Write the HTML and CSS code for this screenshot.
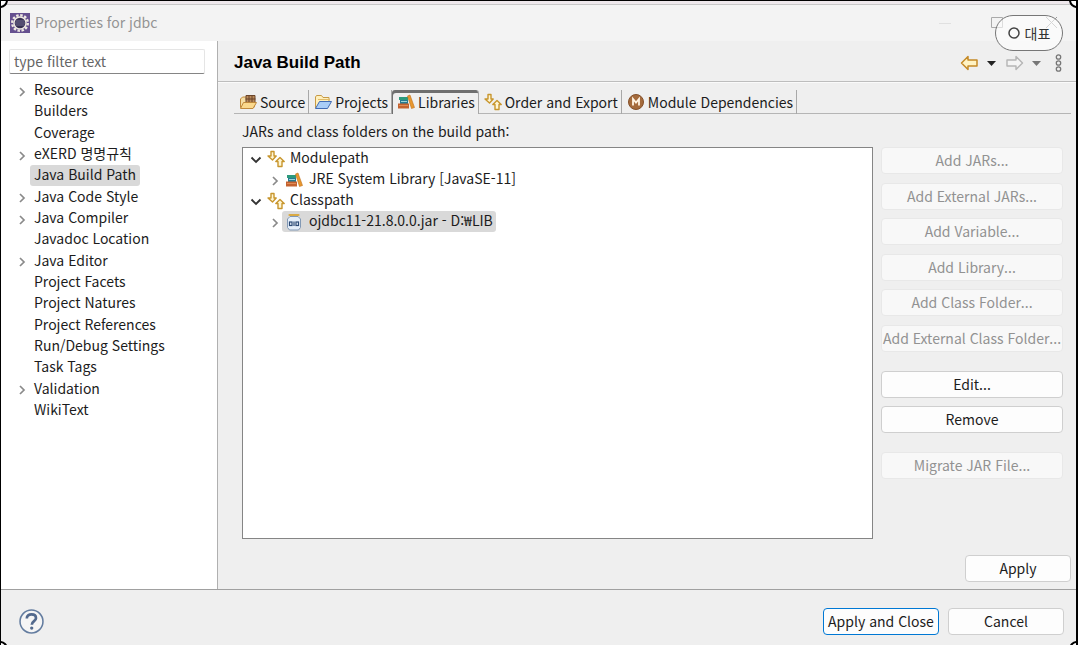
FILE: index.html
```html
<!DOCTYPE html>

<html lang="ko">

	<head>
		<meta charset="utf-8">
		<title>Properties for jdbc</title>
		<link rel="stylesheet" href="styles.css">
	</head>

	<body>

		<!-- shapes used more than once -->
		<svg class="symbols">
			<symbol id="closed" viewBox="0 0 8 10"><path d="M2 1l4 4-4 4" fill="none" stroke="#8a8a8a" stroke-width="1.7"/></symbol>
			<symbol id="opened" viewBox="0 0 12 8"><path d="M1.5 1.5L6 6l4.500-4.500" fill="none" stroke="#333" stroke-width="1.900"/></symbol>
			<symbol id="order" viewBox="0 0 18 18">
				<g fill="#fff6d5" stroke="#c8962e" stroke-width="1.400" stroke-linejoin="round">
					<path d="M4 1.500h3v4.500h2.200L5.500 10 1 6h3z"/>
					<path d="M13 7.500l4.200 4h-2.200v5h-4v-5H8.800z"/>
				</g>
			</symbol>
			<symbol id="books" viewBox="0 0 18 16">
				<path d="M2 3h9v3H2z" fill="#2c9a7c"/>
				<path d="M3 6h8v4H3z" fill="#267a93"/>
				<path d="M4 7h6v1H4z" fill="#9bd4d6"/>
				<path d="M1 9.500h11v5H1z" fill="#c4622f"/>
				<path d="M2 11h9v1H2z" fill="#e08b56"/>
				<path d="M10.500 2l2.500-1 4.500 12.500-3 1z" fill="#e9982e" stroke="#bd6e1b" stroke-width=".6"/>
			</symbol>
		</svg>

		<div class="window">

			<header class="title-bar">
				<svg class="app-icon" viewBox="0 0 20 20">
					<rect width="20" height="20" fill="#65508f"/>
					<circle cx="10" cy="10" r="7.800" fill="none" stroke="#eee9e2" stroke-width="2.400" stroke-dasharray="2.500 1.580"/>
					<circle cx="10" cy="10" r="6.800" fill="#eee9e2"/>
					<circle cx="10" cy="10" r="5.300" fill="#363052"/>
					<path d="M5.500 8h9M5 10h10M5.500 12h9" stroke="#736d91"/>
				</svg>
				<h1>Properties for jdbc</h1>
				<svg class="window-controls" viewBox="0 0 122 16">
					<path d="M0 8.500h12" stroke="#e0e0e0"/>
					<path d="M52.500 2.500h11v10h-11z" fill="none" stroke="#aaa"/>
					<path d="M107 2l11 11M118 2l-11 11" stroke="#999"/>
				</svg>
				<div class="badge"><svg viewBox="0 0 12 12"><circle cx="6" cy="6" r="5" fill="none" stroke="#444" stroke-width="1.500"/></svg>대표</div>
			</header>

			<div class="content">

				<nav class="sidebar">
					<input class="filter" type="text" placeholder="type filter text" aria-label="Filter">
					<ul class="pages">
						<li><svg class="arrow"><use href="#closed"/></svg><span>Resource</span></li>
						<li><span>Builders</span></li>
						<li><span>Coverage</span></li>
						<li><svg class="arrow"><use href="#closed"/></svg><span>eXERD 명명규칙</span></li>
						<li><span class="selected">Java Build Path</span></li>
						<li><svg class="arrow"><use href="#closed"/></svg><span>Java Code Style</span></li>
						<li><svg class="arrow"><use href="#closed"/></svg><span>Java Compiler</span></li>
						<li><span>Javadoc Location</span></li>
						<li><svg class="arrow"><use href="#closed"/></svg><span>Java Editor</span></li>
						<li><span>Project Facets</span></li>
						<li><span>Project Natures</span></li>
						<li><span>Project References</span></li>
						<li><span>Run/Debug Settings</span></li>
						<li><span>Task Tags</span></li>
						<li><svg class="arrow"><use href="#closed"/></svg><span>Validation</span></li>
						<li><span>WikiText</span></li>
					</ul>
				</nav>

				<main class="page">

					<div class="page-header">
						<h2>Java Build Path</h2>
						<svg class="history" viewBox="0 0 104 18">
							<path d="M1.500 9L8 2.500V6h9v6H8v3.500z" fill="#fff3c4" stroke="#c58a27" stroke-width="1.500" stroke-linejoin="round"/>
							<path d="M27 7h9l-4.500 5z" fill="#222"/>
							<path d="M62.500 9L56 2.500V6h-9v6h9v3.500z" fill="#f4f4f4" stroke="#b5b5b5" stroke-width="1.400" stroke-linejoin="round"/>
							<path d="M72 7h9l-4.500 5z" fill="#777"/>
							<g fill="none" stroke="#777" stroke-width="1.300"><circle cx="98.500" cy="3" r="2.200"/><circle cx="98.500" cy="9" r="2.200"/><circle cx="98.500" cy="15" r="2.200"/></g>
						</svg>
					</div>

					<div class="tabs" role="tablist">
						<button class="tab" type="button" role="tab">
							<svg class="icon" viewBox="0 0 18 16">
								<path d="M1.500 13.500V5L3.500 3h4l1 2h7v8z" fill="#f6dfa5" stroke="#c08a3c"/>
								<path d="M7 1.500h9v7H7z" fill="#b98a5a"/>
								<path d="M7 1.500h9v7H7zM10 1v8M13 1v8M6.500 5h10" fill="none" stroke="#6b452a"/>
								<path d="M1.500 14.500l3-6h13l-3.500 6z" fill="#fbd98d" stroke="#c08a3c"/>
							</svg>
							Source
						</button>
						<button class="tab" type="button" role="tab">
							<svg class="icon" viewBox="0 0 18 16">
								<path d="M1.500 14V3l1-1.500h5L9 3.500h6V7" fill="#fff0bd" stroke="#c79a45"/>
								<path d="M4 5.500h12" stroke="#e1bc6b"/>
								<path d="M1.500 14.500l4-7h12l-4 7z" fill="#a9cdf7" stroke="#416bb3"/>
							</svg>
							Projects
						</button>
						<button class="tab active" type="button" role="tab" aria-selected="true"><svg class="icon"><use href="#books"/></svg>Libraries</button>
						<button class="tab" type="button" role="tab"><svg class="icon"><use href="#order"/></svg>Order and Export</button>
						<button class="tab" type="button" role="tab">
							<svg class="icon" viewBox="0 0 18 18">
								<circle cx="9" cy="9" r="7.500" fill="#a56b3c" stroke="#84502a"/>
								<path d="M6 12.500V6l3 3.500L12 6v6.500" fill="none" stroke="#fff4e4" stroke-width="1.800"/>
							</svg>
							Module Dependencies
						</button>
					</div>

					<p class="caption">JARs and class folders on the build path:</p>

					<div class="libraries">

						<ul class="entries">
							<li><svg class="arrow open"><use href="#opened"/></svg><svg class="icon"><use href="#order"/></svg><span>Modulepath</span></li>
							<li class="child"><svg class="arrow"><use href="#closed"/></svg><div class="entry"><svg class="icon"><use href="#books"/></svg><span>JRE System Library [JavaSE-11]</span></div></li>
							<li><svg class="arrow open"><use href="#opened"/></svg><svg class="icon"><use href="#order"/></svg><span>Classpath</span></li>
							<li class="child">
								<svg class="arrow"><use href="#closed"/></svg>
								<div class="entry selected">
									<svg class="icon" viewBox="0 0 18 18">
										<path d="M5 3.500L2.500 6v8.500l2 2.500h9l2-2.500V6L13 3.500z" fill="#e5effa" stroke="#8299b5"/>
										<path d="M4.500 2h9" stroke="#d9aa45" stroke-width="2.200" stroke-linecap="round"/>
										<g fill="none" stroke="#2d4b76" stroke-width="1.200"><rect x="4.500" y="9" width="2.500" height="3.500"/><path d="M9 8.500v4.500"/><rect x="11" y="9" width="2.500" height="3.500"/></g>
									</svg>
									<span>ojdbc11-21.8.0.0.jar - D:₩LIB</span>
								</div>
							</li>
						</ul>

						<div class="actions">
							<div class="group adders">
								<button type="button" disabled>Add JARs...</button>
								<button type="button" disabled>Add External JARs...</button>
								<button type="button" disabled>Add Variable...</button>
								<button type="button" disabled>Add Library...</button>
								<button type="button" disabled>Add Class Folder...</button>
								<button type="button" disabled>Add External Class Folder...</button>
							</div>
							<div class="group">
								<button type="button">Edit...</button>
								<button type="button">Remove</button>
							</div>
							<div class="group">
								<button type="button" disabled>Migrate JAR File...</button>
							</div>
						</div>

					</div>

					<div class="apply-row">
						<button type="button">Apply</button>
					</div>

				</main>

			</div>

			<footer class="footer">
				<button class="help" type="button" aria-label="Help">
					<svg viewBox="0 0 24 24">
						<circle cx="12" cy="12" r="11" fill="#f5f5f5" stroke="#647da0" stroke-width="1.500"/>
						<path d="M7.500 9c0-2.500 2-3.800 4.500-3.800s4.300 1.400 4.300 3.600c0 2.800-4 2.900-4 6.200" fill="none" stroke="#52698d" stroke-width="2.600"/>
						<circle cx="12.200" cy="18.300" r="1.600" fill="#52698d"/>
					</svg>
				</button>
				<button class="primary" type="button">Apply and Close</button>
				<button type="button">Cancel</button>
			</footer>

			<!-- selection handles -->
			<i class="handle top left"></i>
			<i class="handle top right"></i>
			<i class="handle bottom left"></i>
			<i class="handle bottom right"></i>

		</div>

	</body>

</html>
```

FILE: styles.css
```css
* { box-sizing:border-box; }
body {
	margin:0;
	color:#1c1c1c;
	background:#efefef;
	font-family: "Noto Sans CJK KR", sans-serif;
	font-size:14px;
	line-height:20px;
}
button, input { font:inherit; color:inherit; }
ul { list-style:none; margin:0; padding:0; }
svg { flex:none; }
.symbols { display:none; }

.window {
	position:relative;
	display:flex;
	flex-direction:column;
	height:100vh;
	overflow:hidden;
	border:1px solid #000;
	border-right-width:2px;
	border-bottom:0;
}

.title-bar {
	position:relative;
	display:flex;
	align-items:center;
	height:40px;
	padding:0 15px 0 9px;
	border-top:3px solid #eee8ec;
	background:#f3f3f3;
	box-shadow: inset 0 1px 0 #c8c8c8;
}
.title-bar h1 {
	flex:1;
	margin:0 0 0 5px;
	padding-bottom:1px;
	color:#949494;
	font-size:14px;
	font-weight:normal;
}
.app-icon { width:20px; height:20px; }
.window-controls { width:122px; height:16px; }
.badge {
	position:absolute;
	top:11px;
	right:13px;
	display:flex;
	align-items:center;
	justify-content:center;
	gap:5px;
	width:68px;
	height:36px;
	border:1px solid #777;
	border-radius:18px;
	background:rgba(255, 255, 255, 0.6);
	color:#333;
}
.badge svg { width:12px; height:12px; }

.content { display:flex; flex:1; min-height:0; }

.sidebar {
	width:217px;
	flex:none;
	padding:8px 12px 0 8px;
	border-right:1px solid #b0b0b0;
	background:#fff;
}
.filter {
	display:block;
	width:100%;
	height:25px;
	padding:0 4px 1px;
	border:1px solid #e5e5e5;
	border-bottom-color:#858585;
	border-radius:2px;
	outline:0;
}
.filter::placeholder { color:#666; opacity:1; }
.pages {
	display:grid;
	grid-auto-rows:1fr;
	height:341px;
	margin-top:6px;
}
.pages li { display:flex; align-items:center; padding-left:21px; }
.pages .arrow { margin-left:-12px; margin-right:4px; }
.pages span { padding:0 4px; border-radius:3px; white-space:nowrap; }
.pages span, .entries span { padding-bottom:2px; line-height:19px; }
.arrow { width:8px; height:10px; position:relative; top:1px; }
.arrow.open { width:12px; height:8px; }
.icon { width:18px; height:18px; }
.selected { background:#d9d9d9; }

.page { display:flex; flex-direction:column; flex:1; min-width:0; }
.page-header {
	display:flex;
	align-items:center;
	justify-content:space-between;
	height:41px;
	padding:3px 12px 0 16px;
	border-bottom:1px solid #bdbdbd;
	box-shadow:0 1px 0 #fafafa;
}
.page-header h2 {
	margin:0;
	color:#000;
	font-family: "Liberation Sans", sans-serif;
	font-size:17px;
}
.history { width:104px; height:18px; }

.tabs {
	display:flex;
	height:24px;
	margin:8px 5px 0 16px;
	box-shadow: inset 0 -1px 0 #b5b5b5;
}
.tab {
	display:flex;
	align-items:center;
	gap:3px;
	padding:0 3px 1px 5px;
	border:0;
	border-right:1px solid #a8a8a8;
	background:none;
	white-space:nowrap;
}
.tab.active {
	border-radius:3px 3px 0 0;
	background:#efefef;
	box-shadow: inset 1px 3px 0 #6f6f6f;
}

.caption { margin:7px 0 6px 24px; }

.libraries { display:flex; flex:1; gap:8px; padding:0 13px 0 24px; }
.entries {
	flex:1;
	border:1px solid #858585;
	background:#fff;
}
.entries li { display:flex; align-items:center; height:21px; padding-left:7px; white-space:nowrap; }
.entries li > .icon { margin:0 5px; }
.entries .child { padding-left:28px; }
.entry { display:flex; align-items:center; gap:6px; height:21px; margin-left:3px; padding:0 3px; border-radius:3px; }

.actions { width:182px; flex:none; }
.group {
	display:flex;
	flex-direction:column;
	gap:8px;
	margin-bottom:19px;
}
.group.adders { gap:0; justify-content:space-between; height:205px; }
.group button, .apply-row button, .footer button {
	height:27px;
	padding:0 0 1px;
	border:1px solid #cfcfcf;
	border-radius:4px;
	background:#fdfdfd;
	white-space:nowrap;
}
.group button:disabled { border-color:#e8e8e8; background:#f8f8f8; color:#929292; }

.apply-row { display:flex; justify-content:flex-end; padding:16px 5px 7px 0; }
.apply-row button { width:106px; }

.footer {
	display:flex;
	align-items:center;
	gap:9px;
	height:56px;
	padding:7px 12px 0 18px;
	border-top:1px solid #a0a0a0;
}
.footer button { width:116px; }
.footer .primary { border-color:#0078d4; }
.footer .help {
	width:25px;
	height:25px;
	margin-right:auto;
	padding:0;
	border:0;
	background:none;
}
.help svg { display:block; width:25px; height:25px; }

.handle {
	position:absolute;
	width:16px;
	height:16px;
	border:2px solid #000;
	border-radius:50%;
	background:#fff;
}
.handle.top { top:-9px; }
.handle.bottom { bottom:-12px; }
.handle.left { left:-9px; }
.handle.right { right:-9px; }
```
